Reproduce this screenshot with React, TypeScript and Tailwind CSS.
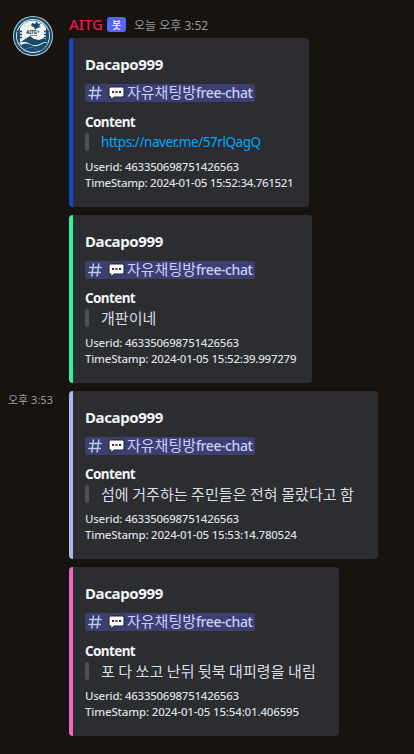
import React from 'react';

type Embed = {
  height: string;
  width: string;
  bar: string;
  content: string;
  contentStyle: string;
  stamp: string;
  stampStyle: string;
  fieldGap: string;
  time?: string;
};

const korean = "text-[15px] tracking-[0.07px] text-[#dbdee1] font-['Noto_Sans_CJK_KR',sans-serif]";

const embeds: Embed[] = [
  { height: 'h-[169px]', width: 'w-[240px]', bar: 'bg-[#0f4bc8]', content: 'https://naver.me/57rlQagQ', contentStyle: 'text-[13.5px] tracking-[-0.44px] text-[#00a8fc]', stamp: '2024-01-05 15:52:34.761521', stampStyle: 'tracking-[-0.31px]', fieldGap: 'mt-[11px]' },
  { height: 'h-[168px]', width: 'w-[243px]', bar: 'bg-[#2df598]', content: '개판이네', contentStyle: korean, stamp: '2024-01-05 15:52:39.997279', stampStyle: 'tracking-[-0.23px]', fieldGap: 'mt-[10px]' },
  { height: 'h-[168px]', width: 'w-[309px]', bar: 'bg-[#acb8f0]', content: '섬에 거주하는 주민들은 전혀 몰랐다고 함', contentStyle: korean, stamp: '2024-01-05 15:53:14.780524', stampStyle: 'tracking-[-0.22px]', fieldGap: 'mt-[10px]', time: '오후 3:53' },
  { height: 'h-[169px]', width: 'w-[270px]', bar: 'bg-[#f066c8]', content: '포 다 쏘고 난뒤 뒷북 대피령을 내림', contentStyle: korean, stamp: '2024-01-05 15:54:01.406595', stampStyle: 'tracking-[-0.16px]', fieldGap: 'mt-[11px]' },
];

function Avatar() {
  return (
    <svg viewBox="0 0 40 40" className="h-10 w-10 shrink-0" aria-label="AITG">
      <circle cx="20" cy="20" r="20" fill="#b9cbd2" />
      <circle cx="20" cy="20" r="19" fill="#10476b" />
      <circle cx="20" cy="20" r="17" fill="#dce8ea" />
      <circle cx="20" cy="20" r="16" fill="#174b6b" />
      <path d="M7 12Q11 4.5 20 4.5Q29 4.5 33 12V25L7 26Z" fill="#f4f6f1" />
      <path d="M4 15.5h5M4 18.5h5M4 21.5h5M31 15.5h5M31 18.5h5M31 21.5h5" stroke="#174b6b" strokeWidth="1.3" />
      <path d="M6 27L17 20L21 23L26 24L31 22L35 25L33 29L24 29L8 31Z" fill="#174b6b" />
      <path d="M6 27Q12 24 17 28Q22 31 29 27Q33 25 35 27Q33 33 26 35Q22 31 16 32Q11 33 9 30Z" fill="#e9f0ec" />
      <path d="M8 29Q13 26 18 29Q23 32 29 28Q32 26 35 27Q31 34 26 35Q20 29 11 33Z" fill="#174b6b" />
      <path d="M19 7l3 1 2-3 1 3 3-1-2 3 2 1-4 1-2 2-1-3-3-1z" fill="#174b6b" />
      <path d="M11 7h5v3h-5z" fill="none" stroke="#c8d7dc" strokeWidth=".7" />
      <text x="20" y="18" textAnchor="middle" fill="#203e55" fontFamily="Noto Sans, sans-serif" fontSize="4.5" fontWeight="800">AITG+</text>
      <path d="M17 19.5h7" stroke="#667b86" strokeWidth=".8" />
    </svg>
  );
}

function Hash() {
  return (
    <svg viewBox="0 0 14 14" className="ml-[3px] h-[14px] w-[14px] shrink-0" fill="none" stroke="#bfc5f3" strokeWidth="1.5" strokeLinecap="round">
      <path d="M5.4 1 3.7 13M10.8 1 9.1 13M1.6 4.5h11.5M.8 9.5h11.5" />
    </svg>
  );
}

function Bubble() {
  return (
    <svg viewBox="0 0 17 15" className="ml-[6px] h-[15px] w-[17px] shrink-0">
      <path d="M2 1h13l1 1v8l-1 1H6l-3 3v-3H2l-1-1V2z" fill="#fff" stroke="#20232b" strokeWidth="1" />
      <path d="M4 5h2v2H4zM7.5 5h2v2h-2zM11 5h2v2h-2z" fill="#292b30" />
    </svg>
  );
}

function Card({ item }: { item: Embed }) {
  return (
    <article className={`flex shrink-0 overflow-hidden rounded-[4px] bg-[#2b2d31] ${item.height} ${item.width}`}>
      <div className={`w-1 shrink-0 ${item.bar}`} />
      <div className="min-w-0 pt-[15px] pl-3 whitespace-nowrap">
        <h2 className="h-[22px] text-[15px] leading-[23px] font-bold tracking-[-0.38px] text-[#f2f3f5]">Dacapo999</h2>
        <div className="mt-[9px] flex h-[18px] w-[170px] items-center rounded-[3px] bg-[#3c4070] text-[#c9cdfb]">
          <Hash />
          <Bubble />
          <span className="mb-[2px] ml-[2px] w-[69px] text-[15px] leading-[18px] font-['Noto_Sans_CJK_KR',sans-serif]">자유채팅방</span>
          <span className="text-[14px] leading-[18px] font-medium tracking-[-0.42px]">free-chat</span>
        </div>
        <h3 className={`h-[18px] text-[13.5px] leading-[18px] font-bold tracking-[-0.62px] text-[#f2f3f5] ${item.fieldGap}`}>Content</h3>
        <div className="mt-[2px] flex h-[18px]">
          <div className="mr-3 w-1 shrink-0 rounded-[3px] bg-[#4e5058]" />
          <span className={`leading-[18px] ${item.contentStyle}`}>{item.content}</span>
        </div>
        <div className="mt-[8px] text-[11.5px] leading-4 font-medium text-[#dbdee1]">
          <p className="tracking-[-0.25px]">Userid: 463350698751426563</p>
          <p className={item.stampStyle}>TimeStamp: {item.stamp}</p>
        </div>
      </div>
    </article>
  );
}

export default function App() {
  return (
    <main className="h-[754px] w-[414px] overflow-hidden bg-[#17140f] font-['Noto_Sans','Noto_Sans_CJK_KR',sans-serif]">
      <div className="flex">
        <div className="w-[69px] shrink-0 pt-4 pl-[13px]"><Avatar /></div>
        <header className="flex h-[38px] items-start pt-[14px] whitespace-nowrap">
          <span className="w-[38px] text-[15px] leading-[21px] font-medium tracking-[-0.1px] text-[#ed1854]">AITG</span>
          <span className="mt-[3px] flex h-[15px] w-[19px] items-center justify-center rounded-[3px] bg-[#5865f2] font-['Noto_Sans_CJK_KR',sans-serif] text-[10px] leading-[15px] font-medium text-white">봇</span>
          <span className="ml-2 text-[12px] leading-[24px] text-[#949ba4]">오늘 오후 3:52</span>
        </header>
      </div>
      <section className="-mt-[18px] flex flex-col gap-2">
        {embeds.map((item) => (
          <div className="flex" key={item.stamp}>
            <div className="w-[69px] shrink-0 pl-2 text-[11px] leading-[18px] text-[#949ba4]">{item.time}</div>
            <Card item={item} />
          </div>
        ))}
      </section>
    </main>
  );
}
